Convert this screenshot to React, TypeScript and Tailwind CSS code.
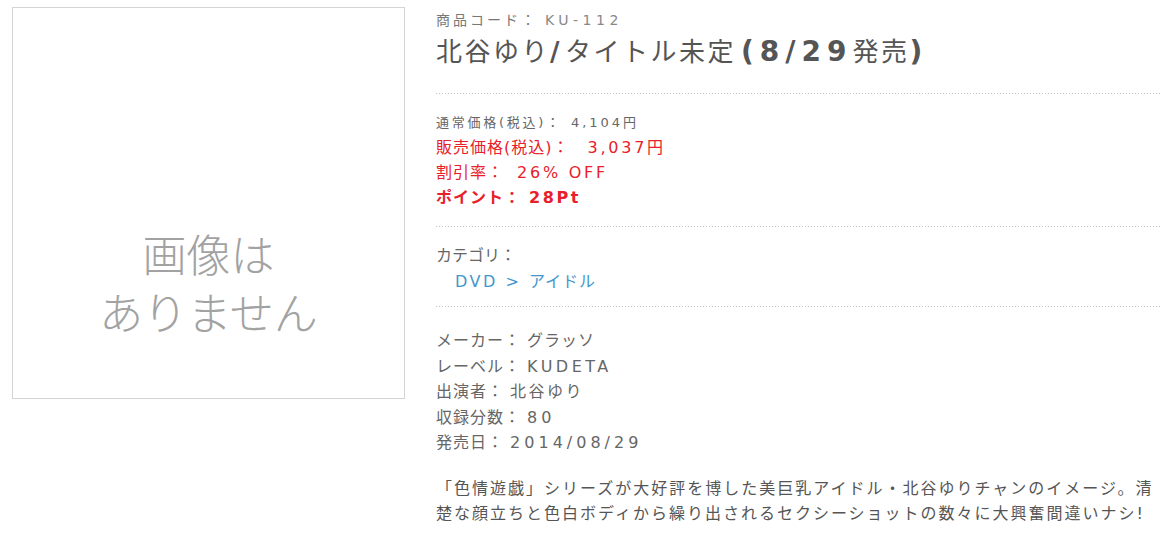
import React from "react";

const Dots = () => (
  <div className="h-px w-full bg-[linear-gradient(to_right,#c4c4c4_1px,transparent_1px)] bg-[length:3px_1px]" />
);

export default function App() {
  return (
    <div className="min-h-[543px] w-[1168px] bg-white font-['DejaVu_Sans','Noto_Sans_CJK_JP',sans-serif] text-[#666]">
      <div className="flex pl-[12px] pt-[7px]">
        <div className="flex h-[392px] w-[393px] shrink-0 flex-col items-center border border-[#d4d4d4] pt-[216px] font-['Noto_Sans_CJK_JP',sans-serif] text-[44px] font-light leading-[58px] text-[#a2a2a2]">
          <div>画像は</div>
          <div>ありません</div>
        </div>
        <div className="ml-[31px] w-[724px] pt-[3px]">
          <div className="whitespace-nowrap text-[14px] leading-[20px] text-[#777]">
            <span className="tracking-[3px]">商品コード：</span>
            <span className="ml-[7px] tracking-[4.5px] text-[#888]">KU-112</span>
          </div>
          <div className="mt-[5px] whitespace-nowrap text-[26px] leading-[34px] tracking-[2.5px] text-[#555]">
            北谷ゆり<span className="pr-[3px] font-bold">/</span>タイトル未定<span className="ml-[5px] text-[28px] font-bold tracking-[6px]">(8/29</span>発売<span className="text-[28px] font-bold">)</span>
          </div>
          <div className="mt-[24px]">
            <Dots />
          </div>
          <div className="mt-[16px] whitespace-nowrap leading-[25px]">
            <div className="text-[13px] text-[#666]">
              <span className="tracking-[2.75px]">通常価格(税込)：</span>
              <span className="ml-[9px] tracking-[3px]">4,104円</span>
            </div>
            <div className="text-[16px] text-[#e8202a]">
              <span className="tracking-[1px]">販売価格(税込)：</span>
              <span className="ml-[18px] tracking-[2.75px]">3,037円</span>
            </div>
            <div className="text-[16px] text-[#e8202a]">
              <span className="tracking-[1px]">割引率：</span>
              <span className="ml-[13px] tracking-[2.75px]">26% OFF</span>
            </div>
            <div className="text-[16px] font-bold text-[#e8202a]">
              <span className="tracking-[1px]">ポイント：</span>
              <span className="ml-[8px] tracking-[2.6px]">28Pt</span>
            </div>
          </div>
          <div className="mt-[16px]">
            <Dots />
          </div>
          <div className="mt-[16px] whitespace-nowrap text-[16px] leading-[26px]">
            <div>カテゴリ：</div>
            <div className="pl-[19px] text-[#4497cc]">
              <span className="tracking-[2.5px]">DVD &gt; </span>
              <span className="tracking-[1px]">アイドル</span>
            </div>
          </div>
          <div className="mt-[11px]">
            <Dots />
          </div>
          <div className="mt-[21px] whitespace-nowrap text-[16px] leading-[25.5px] tracking-[1px]">
            <div>
              メーカー： グラッソ
            </div>
            <div>
              レーベル： <span className="tracking-[3.5px]">KUDETA</span>
            </div>
            <div>
              出演者： <span className="tracking-[2.5px]">北谷ゆり</span>
            </div>
            <div>
              収録分数： <span className="tracking-[4px]">80</span>
            </div>
            <div>
              発売日： <span className="tracking-[4px]">2014/08/29</span>
            </div>
          </div>
          <div className="mt-[20px] whitespace-nowrap text-[16px] leading-[25px] tracking-[2px] text-[#555]">
            「色情遊戯」シリーズが大好評を博した美巨乳アイドル・北谷ゆりチャンのイメージ。清
            <br />
            楚な顔立ちと色白ボディから繰り出されるセクシーショットの数々に大興奮間違いナシ!
          </div>
        </div>
      </div>
    </div>
  );
}
